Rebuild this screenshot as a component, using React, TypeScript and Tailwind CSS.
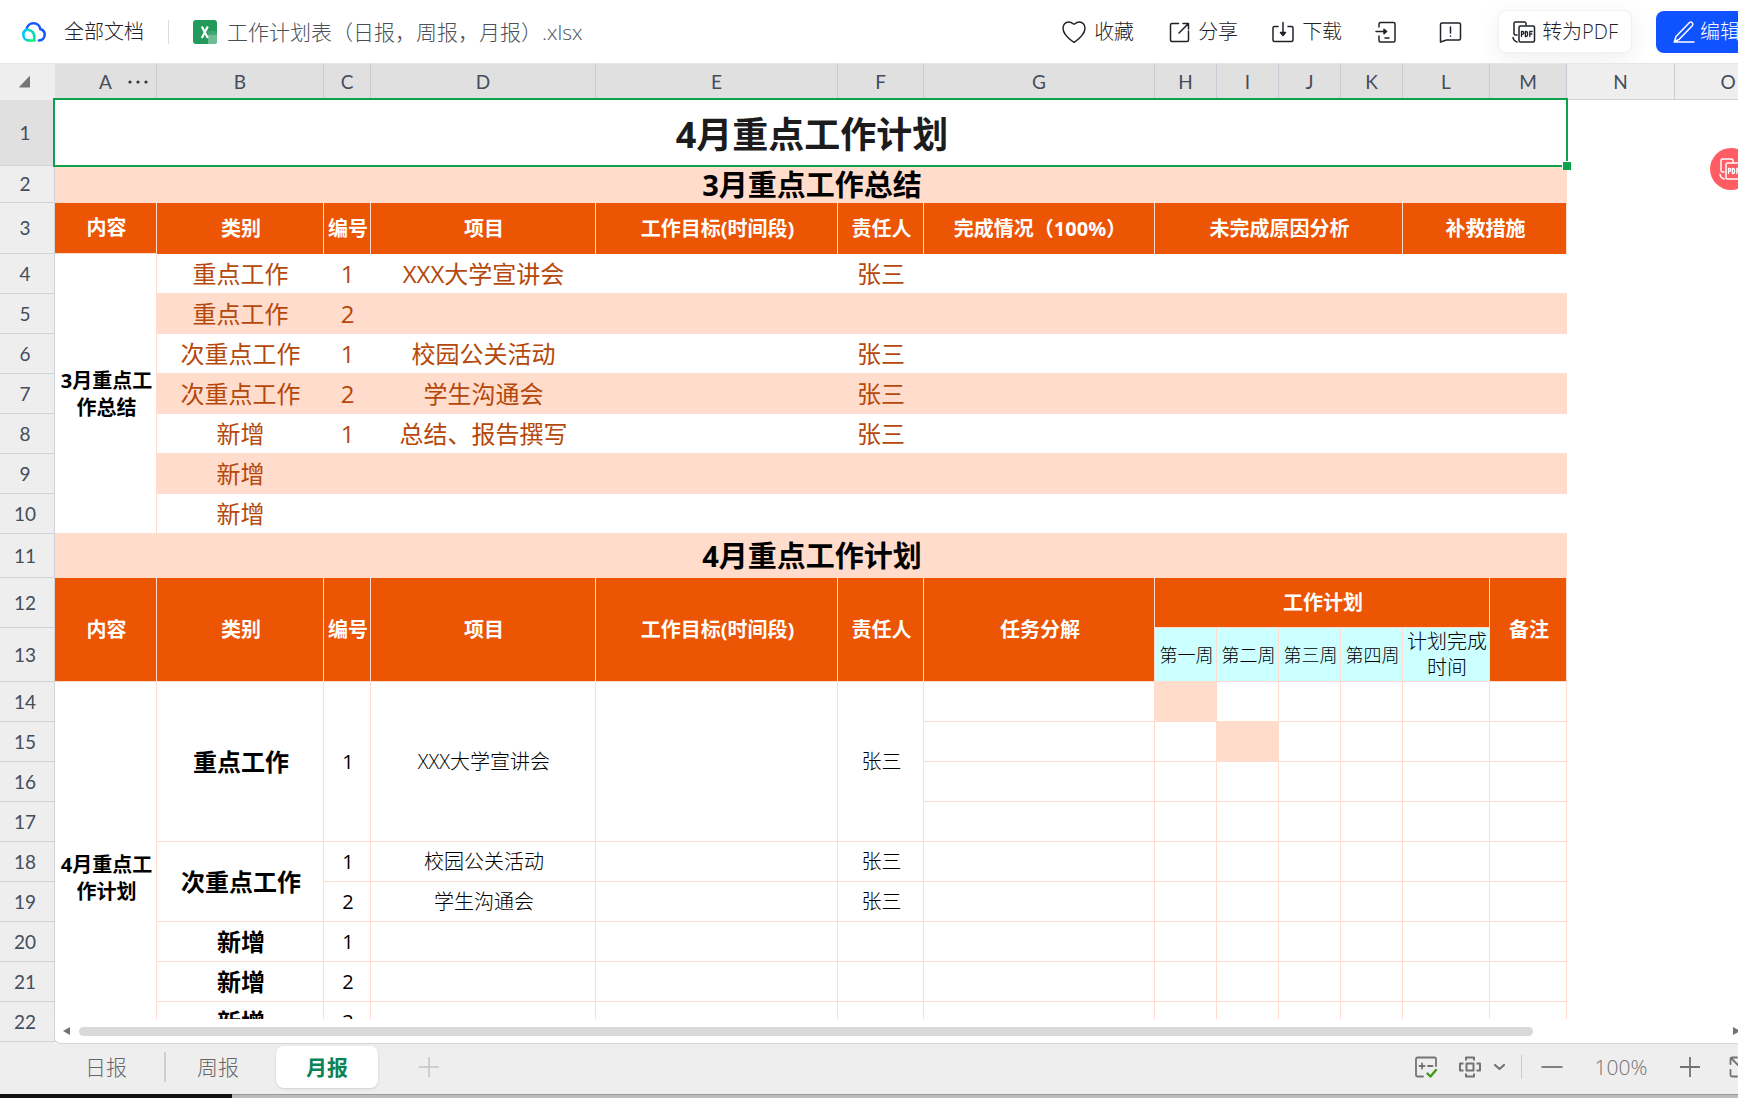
import type { ReactNode } from "react"
import clsx from "clsx"

const columns = [
  { name: "A", width: 102 },
  { name: "B", width: 167 },
  { name: "C", width: 47 },
  { name: "D", width: 225 },
  { name: "E", width: 242 },
  { name: "F", width: 86 },
  { name: "G", width: 231 },
  { name: "H", width: 62 },
  { name: "I", width: 62 },
  { name: "J", width: 62 },
  { name: "K", width: 62 },
  { name: "L", width: 87 },
  { name: "M", width: 77 },
  { name: "N", width: 108 },
  { name: "O", width: 107 },
]

const summaryRows = [
  { row: 4, type: "重点工作", no: "1", project: "XXX大学宣讲会", owner: "张三" },
  { row: 5, type: "重点工作", no: "2", project: "", owner: "" },
  { row: 6, type: "次重点工作", no: "1", project: "校园公关活动", owner: "张三" },
  { row: 7, type: "次重点工作", no: "2", project: "学生沟通会", owner: "张三" },
  { row: 8, type: "新增", no: "1", project: "总结、报告撰写", owner: "张三" },
  { row: 9, type: "新增", no: "", project: "", owner: "" },
  { row: 10, type: "新增", no: "", project: "", owner: "" },
]

const planRows = [
  { row: 14, type: "重点工作", span: 4, no: "1", project: "XXX大学宣讲会", owner: "张三", week: 0 },
  { row: 15, span: 0, week: 1 },
  { row: 16, span: 0 },
  { row: 17, span: 0 },
  { row: 18, type: "次重点工作", span: 2, no: "1", project: "校园公关活动", owner: "张三" },
  { row: 19, span: 0, no: "2", project: "学生沟通会", owner: "张三" },
  { row: 20, type: "新增", span: 1, no: "1" },
  { row: 21, type: "新增", span: 1, no: "2" },
  { row: 22, type: "新增", span: 1, no: "3" },
]

const headCell = "border-r border-[#ffdccb] bg-[#ec5504] pl-0.5 text-center align-middle text-xl leading-6 font-bold text-white"
const gridCell = "border-r border-b border-[#ffdccb] pl-0.5 text-center align-middle text-xl leading-6 text-black"

function Icon({ children, className }: { children: ReactNode; className?: string }) {
  return (
    <svg
      viewBox="0 0 24 24"
      className={clsx("h-6 w-6 shrink-0", className)}
      fill="none"
      stroke="currentColor"
      strokeWidth="1.5"
      strokeLinecap="round"
      strokeLinejoin="round"
      aria-hidden="true"
    >
      {children}
    </svg>
  )
}

function PdfIcon({ className }: { className?: string }) {
  return (
    <Icon className={className}>
      <path d="M5 15H3.5A1.5 1.5 0 0 1 2 13.5v-10A1.5 1.5 0 0 1 3.500 2h9A1.500 1.500 0 0 1 14 3.500V5" />
      <rect x="7" y="6" width="15.500" height="16" rx="1.500" />
      <path d="M1 17.500q.5 3.500 4 4.500" />
      <path
        strokeWidth="1.300"
        d="M9.500 16.500v-5h1q1.300 0 1.300 1.400t-1.300 1.400h-1M13.400 11.500v5h.6q1.600 0 1.600-2.500t-1.600-2.500zM17.800 16.500v-5h2.400M17.800 14h2"
      />
    </Icon>
  )
}

function TopBar() {
  return (
    <header className="flex h-[63px] shrink-0 items-center bg-white text-xl leading-6 font-light text-[#1f2329]">
      <a href="#docs" className="ml-[22px] flex items-center gap-[18px]">
        <svg viewBox="0 0 24 20" className="h-5 w-6" fill="none" strokeWidth="2.600" strokeLinecap="round" aria-hidden="true">
          <path d="M4.500 7.500C5 3.500 8.200 1.300 11.500 1.300c3.600 0 6.400 2.500 6.900 6 2.600.6 4.300 2.700 4.300 5.300 0 3.300-2.500 5.800-5.700 5.900" stroke="#1456ff" />
          <path d="M4.500 7.500C2.500 8.500 1.300 10.500 1.300 12.700c0 3.200 2.400 5.800 5.700 5.800" stroke="#00c8f8" />
          <path d="M6.500 8q5.500 1 5.700 6v3.500" stroke="#0cd8b4" />
          <path d="M6.500 18.500h6" stroke="#0ff07a" />
        </svg>
        全部文档
      </a>
      <div className="mx-6 h-6 w-px bg-[#dcdcdc]" />
      <svg viewBox="0 0 24 24" className="h-6 w-6 shrink-0" aria-hidden="true">
        <rect width="24" height="24" rx="3" fill="#219a5a" />
        <path d="M15 11h9v5h-9z" fill="#3ea870" />
        <path d="M15 15h9v6a3 3 0 0 1-3 3h-6z" fill="#6fbd92" />
        <path d="M8.800 6.500l6 11.500M14.800 6.500L8.800 18" stroke="#fff" strokeWidth="2.200" />
      </svg>
      <h1 className="ml-2.5 text-[21px] whitespace-nowrap text-[#4b4f57]">工作计划表（日报，周报，月报）.xlsx</h1>

      <div className="-mr-5 ml-auto flex shrink-0 items-center">
        <div className="flex items-center gap-8">
          <button type="button" className="flex items-center gap-2">
            <Icon>
              <path d="M12 22.500C7 19 1 14.500 1 8.200 1 4.800 3.400 2 6.600 2c2.300 0 3.500.9 5.400 2.300C13.900 2.900 15.100 2 17.400 2 20.600 2 23 4.800 23 8.200c0 6.300-6 10.800-11 14.300z" />
            </Icon>
            收藏
          </button>
          <button type="button" className="flex items-center gap-2">
            <Icon>
              <path d="M12.500 3.500H6A1.500 1.500 0 0 0 4.500 5v15A1.500 1.500 0 0 0 6 21.500h15a1.500 1.500 0 0 0 1.500-1.500V11" />
              <path d="M13 13l9-9M17 3.500h5.500V9" />
            </Icon>
            分享
          </button>
          <button type="button" className="flex items-center gap-2">
            <Icon>
              <path d="M8 6.500H4.500A1.500 1.500 0 0 0 3 8v12a1.500 1.500 0 0 0 1.500 1.500h17A1.500 1.500 0 0 0 23 20V8a1.500 1.500 0 0 0-1.500-1.500H18M13 2.500V14" />
              <path d="M10.500 12.500h5L13 15.500z" fill="currentColor" />
            </Icon>
            下载
          </button>
          <button type="button" aria-label="导出" className="mr-2">
            <Icon>
              <path d="M5 7V4a1.500 1.500 0 0 1 1.500-1.500h13A1.500 1.500 0 0 1 21 4v16.500a1.500 1.500 0 0 1-1.500 1.500h-13A1.500 1.500 0 0 1 5 20.500V16M2 11.500h9M11 18h4" />
              <path d="M10 9.200v4.600l2.600-2.300z" fill="currentColor" />
            </Icon>
          </button>
          <button type="button" aria-label="反馈" className="mr-1">
            <Icon>
              <path d="M2.500 22V4.500A1.500 1.500 0 0 1 4 3h17a1.500 1.500 0 0 1 1.500 1.500v14A1.500 1.500 0 0 1 21 20H8.500zM12.500 7v6M12.500 16v.3" />
            </Icon>
          </button>
          <button
            type="button"
            className="flex h-[43px] items-center gap-1.5 rounded-lg border border-[#f1f1f1] bg-white px-[13px] whitespace-nowrap shadow-[0_6px_24px_rgba(0,0,0,0.07)]"
          >
            <PdfIcon />
            转为PDF
          </button>
        </div>
        <button type="button" className="ml-6 flex h-[42px] items-center gap-1 rounded-lg bg-[#0f52ff] pr-[18px] pl-4 whitespace-nowrap text-white">
          <Icon>
            <path d="M2 22h20M2.500 21.500l1.500-5L17.500 2.500q1.500-1 2.700.2t.3 2.700L7 19.500z" />
          </Icon>
          编辑
        </button>
      </div>
    </header>
  )
}

function RowHead({ row, className }: { row: number; className: string }) {
  return (
    <th
      scope="row"
      className={clsx(
        "border-r border-b border-[#d0d3da] pr-1 text-center align-middle font-['Lato','Noto_Sans_CJK_SC',sans-serif] text-[19px] leading-6 font-normal text-[#444d5c]",
        row === 1 ? "bg-[#e0e0e0]" : "bg-[#eeeeee]",
        className
      )}
    >
      {row}
    </th>
  )
}

function Sheet() {
  return (
    <table className="w-0 table-fixed border-separate border-spacing-0">
      <colgroup>
        <col style={{ width: 55 }} />
        {columns.map((col) => (
          <col key={col.name} style={{ width: col.width }} />
        ))}
      </colgroup>
      <thead>
        <tr>
          <td className="h-[37px] border-t border-[#e6e6e6] bg-[#eeeeee] align-middle">
            <svg viewBox="0 0 12 12" className="ml-[19px] h-3 w-3" aria-hidden="true">
              <path d="M10.500 0q.5 0 .5.600V11q0 .5-.6.500H.8q-.8 0-.4-.8z" fill="#767676" />
            </svg>
          </td>
          {columns.map((col, i) => (
            <th
              key={col.name}
              scope="col"
              className={clsx(
                "relative h-[37px] border-t border-r border-b border-t-[#e6e6e6] border-r-[#c9ccd5] border-b-[#d0d3da] text-center align-middle font-['Lato','Noto_Sans_CJK_SC',sans-serif] text-[19px] leading-6 font-normal text-[#444d5c]",
                i < 13 ? "bg-[#e0e0e0]" : "bg-[#eeeeee]"
              )}
            >
              {col.name}
              {col.name === "A" && (
                <svg viewBox="0 0 20 4" className="absolute top-4 right-2 h-1 w-5" fill="#333" aria-hidden="true">
                  <circle cx="2" cy="2" r="1.600" />
                  <circle cx="10" cy="2" r="1.600" />
                  <circle cx="18" cy="2" r="1.600" />
                </svg>
              )}
            </th>
          ))}
        </tr>
      </thead>
      <tbody>
        <tr>
          <RowHead row={1} className="h-[66px]" />
          <td colSpan={13} className="relative pt-1 pl-0.5 text-center align-middle text-4xl leading-[48px] font-bold text-[#1c1c1c]">
            4月重点工作计划
            <div className="pointer-events-none absolute -top-0.5 -right-px -bottom-px -left-0.5 border-2 border-[#0aa34b]">
              <div className="absolute -right-[5px] -bottom-[5px] h-[9px] w-[9px] border-t border-l border-white bg-[#0aa34b]" />
            </div>
          </td>
        </tr>
        <tr>
          <RowHead row={2} className="h-[37px]" />
          <td colSpan={13} className="bg-[#ffdccb] pl-0.5 text-center align-middle text-[29px] leading-8 font-bold text-black">
            3月重点工作总结
          </td>
        </tr>
        <tr>
          <RowHead row={3} className="h-[51px]" />
          <td className={clsx(headCell, "border-b")}>内容</td>
          <td className={headCell}>类别</td>
          <td className={headCell}>编号</td>
          <td className={headCell}>项目</td>
          <td className={headCell}>工作目标(时间段)</td>
          <td className={headCell}>责任人</td>
          <td className={headCell}>完成情况（100%）</td>
          <td colSpan={4} className={headCell}>未完成原因分析</td>
          <td colSpan={2} className={headCell}>补救措施</td>
        </tr>
        {summaryRows.map((item, i) => (
          <tr key={item.row} className="text-2xl leading-8 text-[#b5480b]">
            <RowHead row={item.row} className="h-10" />
            {i === 0 && (
              <td
                rowSpan={7}
                className="border-r border-b border-[#ffdccb] bg-white pl-0.5 text-center align-middle text-xl leading-[27px] font-bold text-black"
              >
                3月重点工
                <br />
                作总结
              </td>
            )}
            {[item.type, item.no, item.project, "", item.owner].map((text, n) => (
              <td key={n} className={clsx("border-b border-[#ffdccb] text-center align-middle", i % 2 === 1 && "bg-[#ffdccb]")}>
                {text}
              </td>
            ))}
            <td colSpan={7} className={clsx("border-b border-[#ffdccb]", i % 2 === 1 && "bg-[#ffdccb]")} />
          </tr>
        ))}
        <tr>
          <RowHead row={11} className="h-11" />
          <td colSpan={13} className="bg-[#ffdccb] pl-0.5 text-center align-middle text-[29px] leading-8 font-bold text-black">
            4月重点工作计划
          </td>
        </tr>
        <tr>
          <RowHead row={12} className="h-[50px]" />
          {["内容", "类别", "编号", "项目", "工作目标(时间段)", "责任人", "任务分解"].map((text) => (
            <td key={text} rowSpan={2} className={clsx(headCell, "border-b")}>
              {text}
            </td>
          ))}
          <td colSpan={5} className={clsx(headCell, "border-b")}>工作计划</td>
          <td rowSpan={2} className={clsx(headCell, "border-b")}>备注</td>
        </tr>
        <tr>
          <RowHead row={13} className="h-[54px]" />
          {["第一周", "第二周", "第三周", "第四周"].map((text) => (
            <td
              key={text}
              className="border-r border-b border-[#ffdccb] bg-[#ccffff] pl-0.5 text-center align-middle text-lg leading-6 font-light text-black"
            >
              {text}
            </td>
          ))}
          <td className="border-r border-b border-[#ffdccb] bg-[#ccffff] pl-0.5 text-center align-middle text-xl leading-[26px] font-light text-black">
            计划完成
            <br />
            时间
          </td>
        </tr>
        {planRows.map((item, i) => (
          <tr key={item.row}>
            <RowHead row={item.row} className="h-10" />
            {i === 0 && (
              <td
                rowSpan={10}
                className="border-r border-[#ffdccb] pl-0.5 text-center align-middle text-xl leading-[27px] font-bold text-black"
              >
                4月重点工
                <br />
                作计划
              </td>
            )}
            {item.span > 0 && (
              <td
                rowSpan={item.span}
                className="border-r border-b border-[#ffdccb] pl-0.5 text-center align-middle text-2xl leading-8 font-bold text-black"
              >
                {item.type}
              </td>
            )}
            {(i === 0 || i > 3) &&
              [item.no, item.project, "", item.owner].map((text, n) => (
                <td key={n} rowSpan={i === 0 ? 4 : 1} className={clsx(gridCell, n > 0 && "font-light")}>
                  {text}
                </td>
              ))}
            <td className={gridCell} />
            {[0, 1, 2, 3].map((week) => (
              <td key={week} className={clsx(gridCell, item.week === week && "bg-[#ffdccb]")} />
            ))}
            <td className={gridCell} />
            <td className={gridCell} />
          </tr>
        ))}
        <tr>
          <td className="h-8 bg-[#eeeeee]" />
        </tr>
      </tbody>
    </table>
  )
}

function Footer() {
  return (
    <footer className="shrink-0">
      <div className="flex h-[50px] items-center bg-[#eeeeee] pb-1 text-[21px] leading-6 font-light text-[#666]">
        <button type="button" className="ml-[54px] w-[110px] pr-1.5 text-center">日报</button>
        <div className="h-[30px] w-0.5 bg-[#cfcfcf]" />
        <button type="button" className="w-[110px] pr-1.5 text-center">周报</button>
        <button type="button" className="h-[42px] w-[102px] rounded-lg bg-white text-center font-bold text-[#0b8457] shadow-sm">
          月报
        </button>
        <button type="button" aria-label="新建工作表" className="ml-[39px] text-[#c3c3c3]">
          <Icon>
            <path d="M2 12h20M12 2v20" strokeLinecap="butt" />
          </Icon>
        </button>
        <div className="-mr-3.5 ml-auto flex items-center text-[#737373]">
          <button type="button" aria-label="公式检查">
            <Icon>
              <path strokeWidth="1.800" d="M9 21.500H3.500A1.500 1.500 0 0 1 2 20V4a1.500 1.500 0 0 1 1.500-1.500h17A1.500 1.500 0 0 1 22 4v7M5.500 11h5M8 8.500v5M14 11h4.500" />
              <path stroke="#3f9a1c" strokeWidth="2.400" d="M13.500 18.500l3 3 5.500-6.500" />
            </Icon>
          </button>
          <button type="button" aria-label="阅读模式" className="ml-5">
            <Icon>
              <path strokeWidth="2" strokeLinecap="butt" d="M8 5.500V2.500h8v3M8 18.500v3h8v-3M5.500 8.500H2v7h3.500M18.500 8.500H22v7h-3.500M8.500 8.500h7v7h-7z" />
            </Icon>
          </button>
          <button type="button" aria-label="更多" className="ml-[5px]">
            <Icon>
              <path strokeWidth="2.200" d="M8 10l4.500 4L17 10" />
            </Icon>
          </button>
          <div className="mr-[18px] ml-2.5 h-6 w-px bg-[#cccccc]" />
          <button type="button" aria-label="缩小">
            <Icon>
              <path strokeWidth="1.800" strokeLinecap="butt" d="M1.500 12h21" />
            </Icon>
          </button>
          <span className="w-[114px] text-center">100%</span>
          <button type="button" aria-label="放大">
            <Icon>
              <path strokeWidth="1.800" strokeLinecap="butt" d="M2 12h20M12 2v20" />
            </Icon>
          </button>
          <button type="button" aria-label="全屏" className="ml-[26px]">
            <Icon>
              <path strokeWidth="1.800" d="M2.500 9V4A1.500 1.500 0 0 1 4 2.500h5M2.500 15v5A1.500 1.500 0 0 0 4 21.500h5M15 2.500h5A1.500 1.500 0 0 1 21.500 4v5M21.500 15v5a1.500 1.500 0 0 1-1.500 1.500h-5M4 4l6 6" />
            </Icon>
          </button>
        </div>
      </div>
      <div className="flex h-1 border-t border-[#9a9a9a] bg-[#bcbcbc]">
        <div className="-mt-px w-[232px] bg-[#111111]" />
      </div>
    </footer>
  )
}

export default function App() {
  return (
    <div className="flex h-screen flex-col overflow-hidden bg-white font-['Open_Sans','Noto_Sans_CJK_SC',sans-serif]">
      <TopBar />
      <main className="relative min-h-0 flex-1 overflow-hidden bg-white">
        <Sheet />
        <button
          type="button"
          aria-label="转为PDF"
          className="absolute top-[85px] -right-3.5 flex h-[42px] w-[42px] items-center justify-center rounded-full bg-[#ff5c63] text-white"
        >
          <PdfIcon />
        </button>
        <div className="absolute right-0 bottom-0 left-[54px] flex h-[25px] items-center rounded-bl-md border-b border-l border-[#d3d5da] bg-white pl-2">
          <svg viewBox="0 0 8 8" className="h-2 w-2 shrink-0" aria-hidden="true">
            <path d="M0 4l7-4v8z" fill="#737373" />
          </svg>
          <div className="ml-2 h-[9px] flex-1 rounded-full bg-[#d9d9d9]" />
          <svg viewBox="0 0 8 8" className="-mr-0.5 ml-[199px] h-2 w-2 shrink-0" aria-hidden="true">
            <path d="M8 4L1 0v8z" fill="#737373" />
          </svg>
        </div>
      </main>
      <Footer />
    </div>
  )
}
